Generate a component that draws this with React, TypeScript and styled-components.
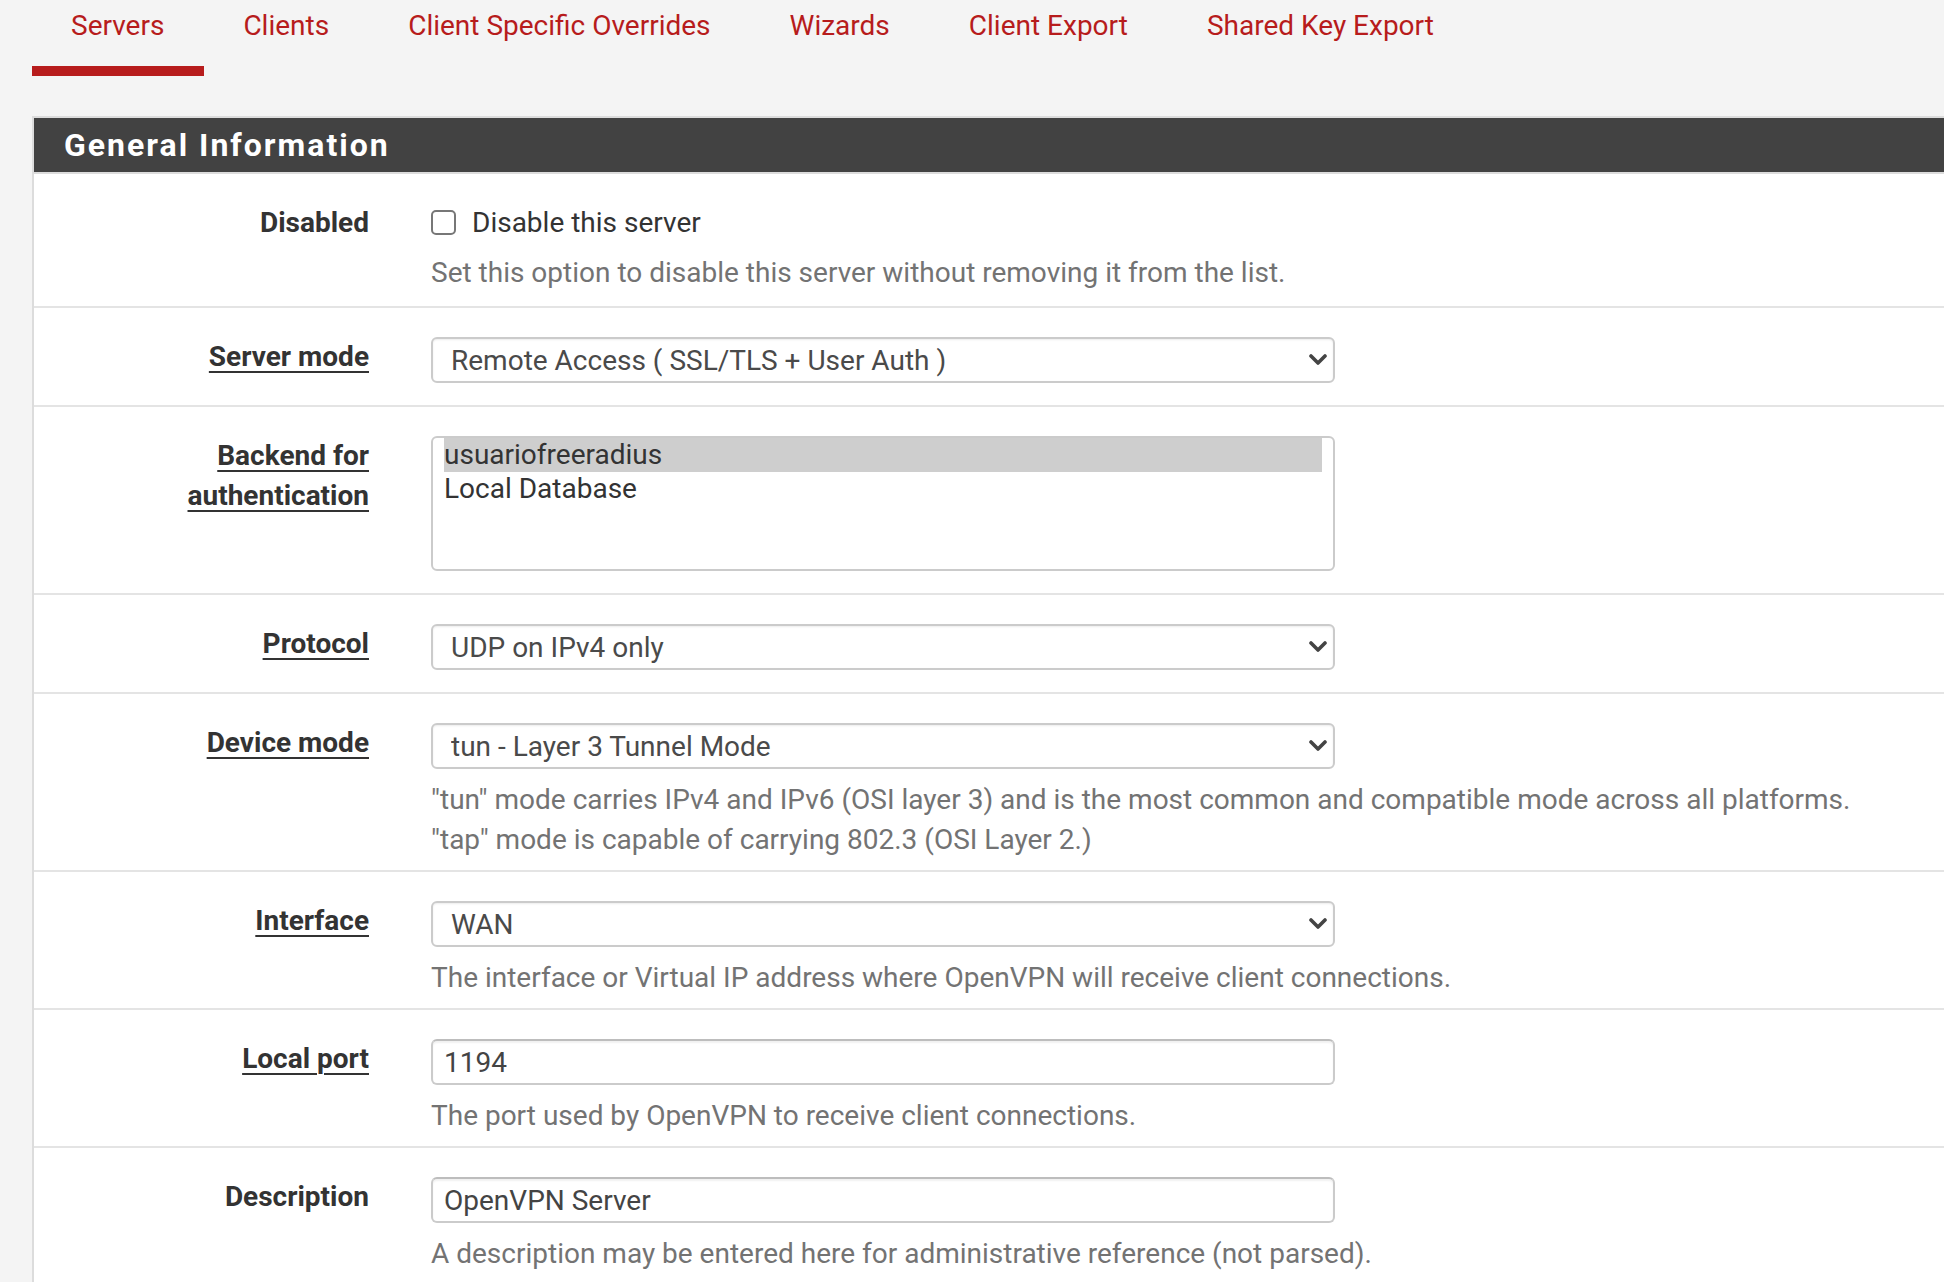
import React from 'react';
import styled, { createGlobalStyle } from 'styled-components';

const GlobalStyle = createGlobalStyle`
  html, body {
    margin: 0;
    padding: 0;
    background: #f4f4f4;
    overflow: hidden;
    font-family: Roboto, "Liberation Sans", sans-serif;
    color: #333;
  }
  * { box-sizing: border-box; }
`;

const Page = styled.div`
  padding-left: 32px;
`;

const Tabs = styled.ul`
  display: flex;
  list-style: none;
  margin: 0 0 40px;
  padding: 6px 0 0;
`;

const Tab = styled.li<{ $active?: boolean }>`
  padding: 0 40px 20px 39px;
  font-size: 28px;
  line-height: 40px;
  color: #b71c1c;
  white-space: nowrap;
  border-bottom: 10px solid ${p => (p.$active ? '#b71c1c' : 'transparent')};
  cursor: pointer;
`;

const Panel = styled.section`
  background: #fff;
  border: 2px solid #dcdcdc;
  border-right: none;
`;

const PanelHeading = styled.div`
  height: 56px;
  background: #424242;
  border-bottom: 2px solid #dcdcdc;
  padding-left: 30px;
`;

const PanelTitle = styled.h2`
  margin: 0;
  font-size: 32px;
  line-height: 55px;
  font-weight: 700;
  letter-spacing: 2px;
  color: #fff;
`;

const Row = styled.div`
  display: grid;
  grid-template-columns: 335px 1fr;
  column-gap: 62px;
  padding: 29px 0 22px;
  border-bottom: 2px solid #e4e4e4;
`;

const Label = styled.div`
  text-align: right;
  font-size: 28px;
  line-height: 40px;
  font-weight: 700;
  color: #333;
`;

const Required = styled.span`
  text-decoration: underline;
  text-decoration-thickness: 2px;
  text-underline-offset: 5px;
`;

const Field = styled.div`
  min-width: 0;
`;

const CheckLine = styled.label`
  display: flex;
  align-items: center;
  gap: 16px;
  height: 40px;
  margin-top: -1px;
  font-size: 28px;
  color: #333;
`;

const Check = styled.input`
  appearance: none;
  margin: 0;
  width: 25px;
  height: 25px;
  border: 2px solid #777;
  border-radius: 5px;
  background: #fff;
`;

const Help = styled.div<{ $tight?: boolean }>`
  margin: ${p => (p.$tight ? '11px 0 -9px' : '11px 0 -12px')};
  font-size: 28px;
  line-height: 40px;
  color: #737373;
  white-space: nowrap;
`;

const SelectWrap = styled.div`
  position: relative;
  width: 904px;
`;

const Select = styled.select`
  appearance: none;
  display: block;
  width: 100%;
  height: 46px;
  margin: 0;
  padding: 0 40px 0 18px;
  border: 2px solid #cbcbcb;
  border-radius: 6px;
  background: #fff;
  box-shadow: inset 0 1px 2px rgba(0, 0, 0, 0.08);
  font-family: Roboto, "Liberation Sans", sans-serif;
  font-size: 28px;
  color: #4a4a4a;
  outline: none;
`;

const Chevron = styled.svg`
  position: absolute;
  right: 8px;
  top: 50%;
  transform: translateY(-50%);
  pointer-events: none;
`;

const Input = styled.input`
  display: block;
  width: 904px;
  height: 46px;
  margin: 0;
  padding: 0 11px;
  border: 2px solid #cbcbcb;
  border-top-color: #bdbdbd;
  border-radius: 6px;
  background: #fff;
  box-shadow: inset 0 2px 2px rgba(0, 0, 0, 0.06);
  font-family: Roboto, "Liberation Sans", sans-serif;
  font-size: 28px;
  color: #444;
  outline: none;
`;

const ListBox = styled.div`
  width: 904px;
  height: 135px;
  padding: 0 11px;
  border: 2px solid #cbcbcb;
  border-radius: 6px;
  background: #fff;
  overflow: hidden;
`;

const Option = styled.div<{ $selected?: boolean }>`
  height: 34px;
  line-height: 34px;
  font-size: 28px;
  color: #333;
  background: ${p => (p.$selected ? '#cecece' : 'transparent')};
`;

const Dropdown = ({ value }: { value: string }) => (
  <SelectWrap>
    <Select defaultValue={value}>
      <option>{value}</option>
    </Select>
    <Chevron width="18" height="12" viewBox="0 0 18 12">
      <polyline points="2,2 9,9 16,2" fill="none" stroke="#444" strokeWidth="3.6" strokeLinecap="round" strokeLinejoin="round" />
    </Chevron>
  </SelectWrap>
);

const tabs = ['Servers', 'Clients', 'Client Specific Overrides', 'Wizards', 'Client Export', 'Shared Key Export'];

export default function App() {
  return (
    <Page>
      <GlobalStyle />
      <Tabs>
        {tabs.map((t, i) => (
          <Tab key={t} $active={i === 0}>{t}</Tab>
        ))}
      </Tabs>

      <Panel>
        <PanelHeading>
          <PanelTitle>General Information</PanelTitle>
        </PanelHeading>

        <Row>
          <Label>Disabled</Label>
          <Field>
            <CheckLine>
              <Check type="checkbox" />
              Disable this server
            </CheckLine>
            <Help $tight>Set this option to disable this server without removing it from the list.</Help>
          </Field>
        </Row>

        <Row>
          <Label><Required>Server mode</Required></Label>
          <Field>
            <Dropdown value="Remote Access ( SSL/TLS + User Auth )" />
          </Field>
        </Row>

        <Row>
          <Label><Required>Backend for<br />authentication</Required></Label>
          <Field>
            <ListBox role="listbox">
              <Option $selected>usuariofreeradius</Option>
              <Option>Local Database</Option>
            </ListBox>
          </Field>
        </Row>

        <Row>
          <Label><Required>Protocol</Required></Label>
          <Field>
            <Dropdown value="UDP on IPv4 only" />
          </Field>
        </Row>

        <Row>
          <Label><Required>Device mode</Required></Label>
          <Field>
            <Dropdown value="tun - Layer 3 Tunnel Mode" />
            <Help>
              "tun" mode carries IPv4 and IPv6 (OSI layer 3) and is the most common and compatible mode across all platforms.
              <br />
              "tap" mode is capable of carrying 802.3 (OSI Layer 2.)
            </Help>
          </Field>
        </Row>

        <Row>
          <Label><Required>Interface</Required></Label>
          <Field>
            <Dropdown value="WAN" />
            <Help>The interface or Virtual IP address where OpenVPN will receive client connections.</Help>
          </Field>
        </Row>

        <Row>
          <Label><Required>Local port</Required></Label>
          <Field>
            <Input defaultValue="1194" />
            <Help>The port used by OpenVPN to receive client connections.</Help>
          </Field>
        </Row>

        <Row>
          <Label>Description</Label>
          <Field>
            <Input defaultValue="OpenVPN Server" />
            <Help>A description may be entered here for administrative reference (not parsed).</Help>
          </Field>
        </Row>
      </Panel>
    </Page>
  );
}
